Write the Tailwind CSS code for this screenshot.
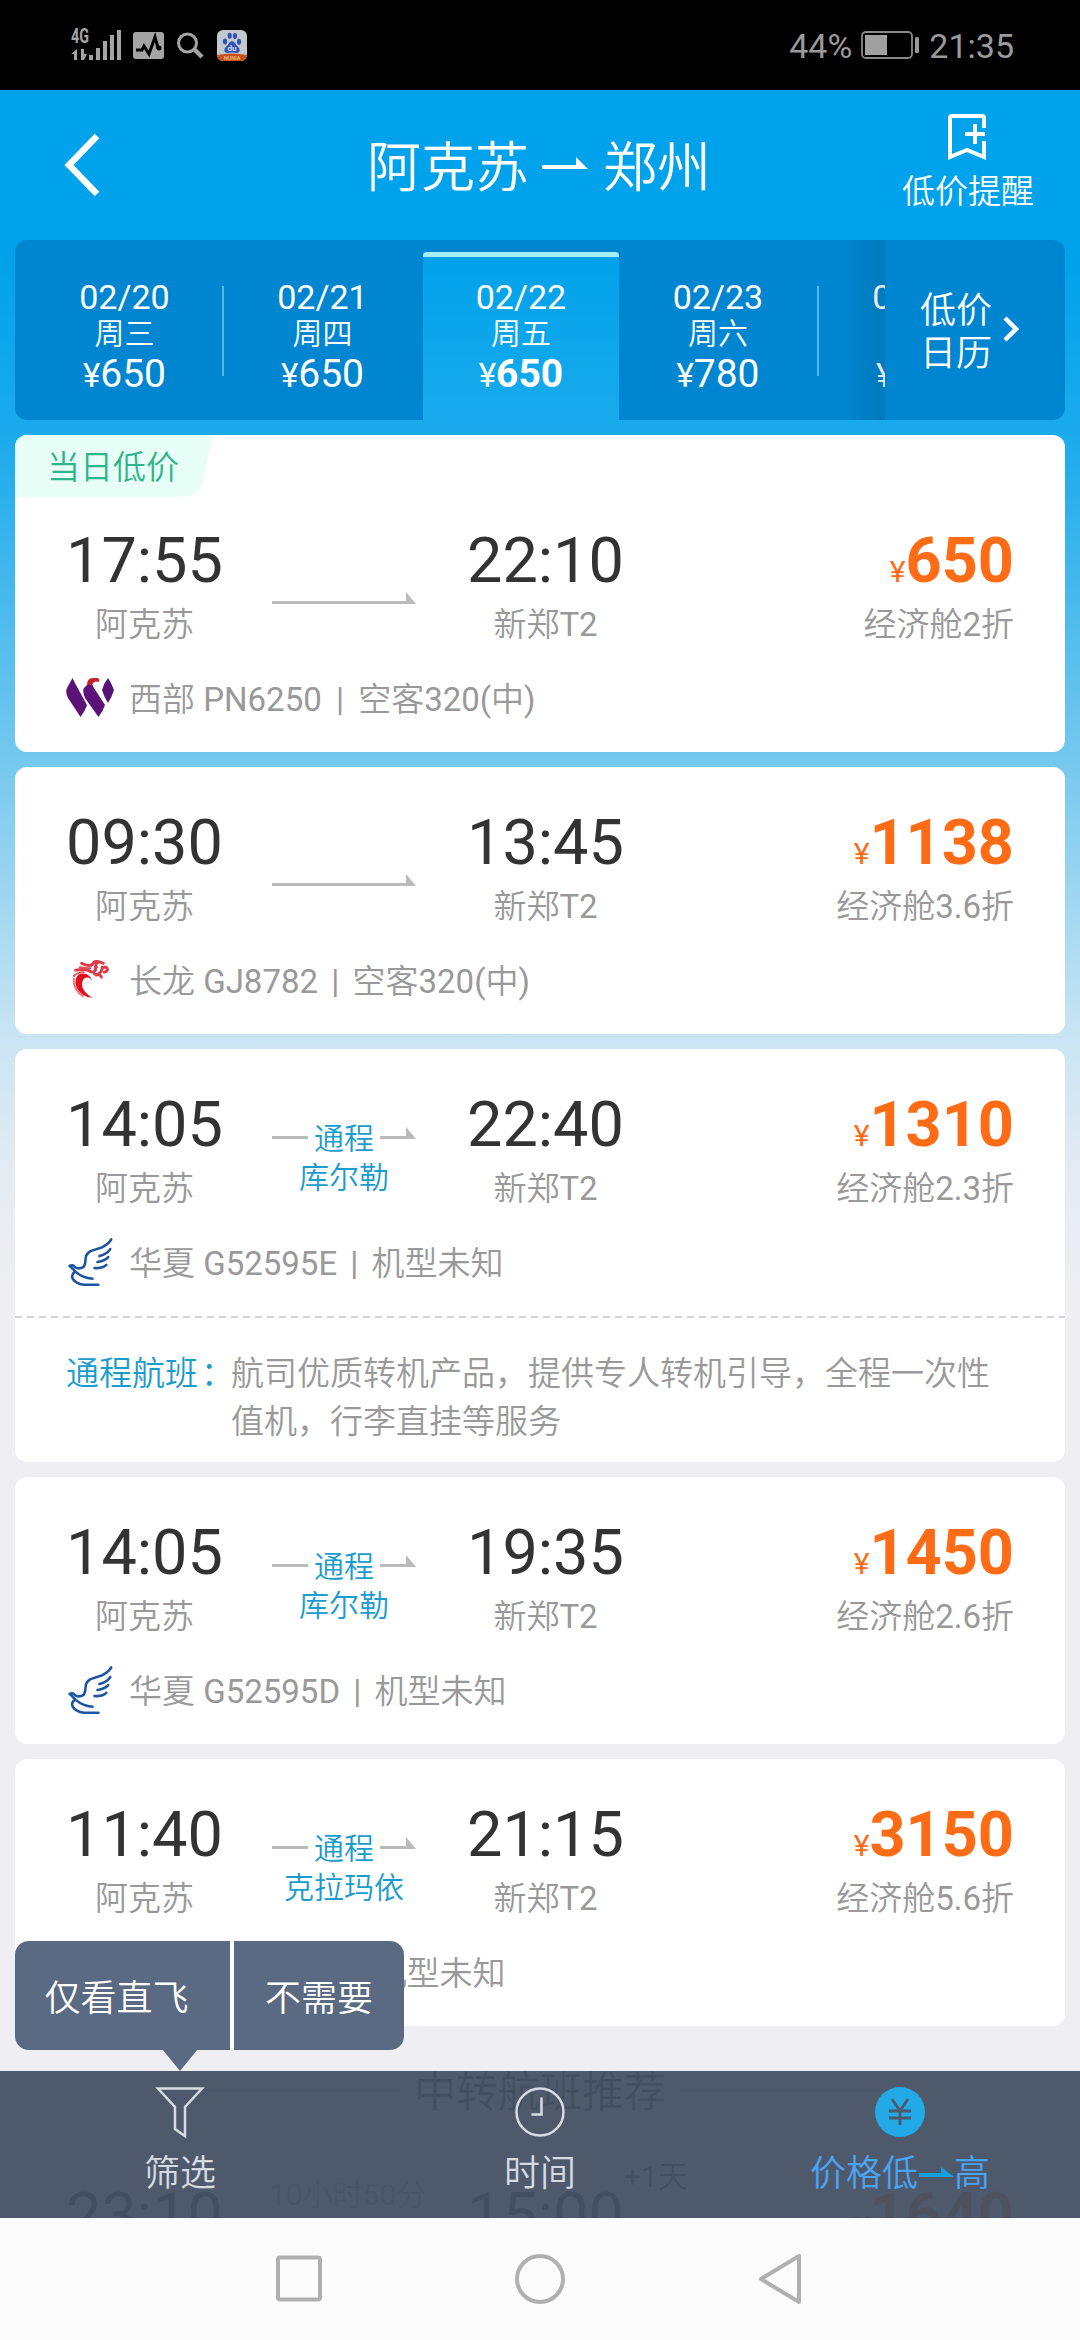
<!DOCTYPE html>
<html lang="zh-CN">
<head>
<meta charset="utf-8">
<title>阿克苏 - 郑州</title>
<script src="https://cdn.jsdelivr.net/npm/@tailwindcss/browser@4"></script>
</head>
<body class="w-[1080px] h-[2340px] overflow-hidden flex flex-col bg-black font-['Roboto','Noto_Sans_CJK_SC_DemiLight','Noto_Sans_CJK_SC',sans-serif]">

<svg class="hidden">
  <!-- airline marks -->
  <symbol id="west" viewBox="0 0 48 48">
    <path fill="#5b1378" d="M6.500 4 10 11 21 31Q19 37 14.500 43L2 24Q-1 18 1 14ZM22 10H26L28 14 39 31Q37 37 32.500 43L19 24Q16 17 18 14ZM42 4Q46 10 48 16 46 23 42 29 38 23 36 16 38 9 42 4Z"/>
    <path fill="#c9202f" d="M21 11Q21 4 27 4H31Q34 4 33 8 28 6 26 11Z"/>
  </symbol>
  <symbol id="loong" viewBox="0 0 75 75">
    <g fill="none" stroke="#dc3a48" stroke-linecap="round">
      <path stroke-width="3" d="M27 20Q34 24 38 21 40 16 49 20M21 27Q32 25 37 29 42 29 41 24M42 32Q48 29 48 24L52 24Q55 28 50 29M40 31Q46 31 47 34M44 19Q40 21 42 24"/>
    </g>
    <path fill="none" stroke="#e2535f" stroke-width="2" stroke-linecap="round" d="M25 24Q31 25 36 25M19 33Q23 29 29 29"/>
    <path fill="#e0101f" d="M38 38Q35 33 30 35 26 39 28 45 31 51 38 55 27 54 22 45 18 35 25 31 34 28 38 38Z"/>
    <path fill="none" stroke="#ef7781" stroke-width="2" d="M19 35Q18 47 29 54"/>
  </symbol>
  <symbol id="swan" viewBox="0 0 75 75">
    <g fill="none" stroke="#1c559f" stroke-width="2.6" stroke-linecap="round" stroke-linejoin="round">
      <path d="M15 41Q18 39 20 42 24 45 29 42 31 39 31 34 31 29 36 26L48 22Q55 18 57 14M45 31Q53 29 56 24M43 37Q51 36 54 32M40 43Q48 44 52 40"/>
      <path d="M15 41 21 47Q28 53 38 54M20 47Q16 50 18 54 21 59 29 60H44"/>
    </g>
  </symbol>
</svg>

<!-- system status bar -->
<div class="h-[90px] shrink-0 flex items-center pl-[71px] pr-[66px] text-[#9a9a9a] text-[34px] leading-none">
  <svg class="w-[51px] h-8 overflow-visible" viewBox="0 0 51 32">
    <text x="0" y="14" font-family="Roboto" font-weight="700" font-size="19.500" textLength="18" lengthAdjust="spacingAndGlyphs" fill="#a4a4a4">4G</text>
    <path fill="#a4a4a4" d="M6 20V31H3V25H0ZM10 20V31H13L16 25H13V20ZM18 26h4v5h-4zM25 19h4v12h-4zM32 12h4v19h-4zM39 6h4v25h-4zM46 1h4v30h-4z"/>
  </svg>
  <svg class="w-[31px] h-[27px] ml-[11px]" viewBox="0 0 31 27"><rect width="31" height="27" rx="3" fill="#a4a4a4"/><path d="M3 18H9L11 14 16 22 22 5 25 16H27" fill="none" stroke="#000" stroke-width="3"/><circle cx="26" cy="16" r="2.5"/></svg>
  <svg class="w-[27px] h-[27px] ml-[13px]" viewBox="0 0 27 27" fill="none" stroke="#a4a4a4"><circle cx="10.500" cy="11" r="9" stroke-width="3"/><path d="M17 17 25 25" stroke-width="4.500"/></svg>
  <svg class="w-[30px] h-[31px] ml-[13px]" viewBox="0 0 30 31">
    <clipPath id="tile"><rect width="30" height="31" rx="6"/></clipPath>
    <g clip-path="url(#tile)"><rect width="30" height="31" fill="#c4c8cf"/>
    <path fill="#2f53b8" d="M8 18Q11 15 12.500 12.500 15 10 17.500 12.500 19 15 22 18 24 22 20 23 15 22 10 23 6 22 8 18Z"/>
    <ellipse cx="8" cy="11.500" rx="2.100" ry="3" fill="#2f53b8"/><ellipse cx="12.700" cy="5.800" rx="2.100" ry="3" fill="#2f53b8"/><ellipse cx="18" cy="6" rx="2.100" ry="3" fill="#2f53b8"/><ellipse cx="22" cy="11.700" rx="2.100" ry="3" fill="#2f53b8"/>
    <path fill="#c8501c" d="M0 25Q15 22 30 25V31H0Z"/></g>
    <text x="15" y="21" text-anchor="middle" font-family="Roboto" font-weight="700" font-size="8" fill="#dde">du</text>
    <text x="15" y="29.500" text-anchor="middle" font-family="Roboto" font-weight="700" font-size="5.500" fill="#e8b070">NUNIA</text>
  </svg>
  <span class="ml-auto pt-0.5">44%</span>
  <svg class="w-[58px] h-7 ml-[9px] mr-[10px]" viewBox="0 0 58 28"><rect x="1" y="1" width="50" height="26" rx="4" fill="none" stroke="#8a8a8a" stroke-width="1.800"/><rect x="4" y="4" width="22" height="20" fill="#a0a0a0"/><rect x="54" y="6" width="4" height="16" rx="1.500" fill="#9a9a9a"/></svg>
  <span class="pt-0.5">21:35</span>
</div>

<!-- app -->
<div class="relative h-[2128px] shrink-0 overflow-hidden bg-[linear-gradient(180deg,#00a2eb_0px,#00a2eb_160px,#1aaaec_340px,#75c8ee_670px,#cae5f3_950px,#e4ebf3_1080px,#eeeef3_1200px)]">

  <header class="h-[150px] flex items-center justify-between pl-16 pr-[46px] text-white">
    <svg class="w-[112px] h-[66px]" viewBox="0 0 112 66"><path d="M33 4 5 33 33 62" fill="none" stroke="#fff" stroke-width="6.500"/></svg>
    <h1 class="flex items-center text-[54px] leading-[60px] pt-2">
      <span>阿克苏</span>
      <svg class="w-[46px] h-3 ml-[13px] mr-[15px] mt-[-12px]" viewBox="0 0 46 12"><path fill="#fff" d="M0 8H34V0L46 12H0Z"/></svg>
      <span>郑州</span>
    </h1>
    <div class="flex flex-col items-center pb-1 text-[33px] leading-10">
      <svg class="w-10 h-[46px] mb-3" viewBox="0 0 40 46" fill="none" stroke="#fff" stroke-width="4"><path d="M36 14V4Q36 2 34 2H4Q2 2 2 4V43L19 36 36 43V27M17 20H37M27 10V30"/></svg>
      <span>低价提醒</span>
    </div>
  </header>

  <!-- date strip -->
  <nav class="mx-[15px] h-[180px] flex rounded-xl overflow-hidden text-white">
    <div class="relative w-[870px] flex overflow-hidden">
      <div class="w-[408px] pl-[11px] flex bg-[#0086d1]">
        <div class="w-[197px] shrink-0 flex flex-col items-center pt-[38px]">
          <span class="text-[34px] leading-[38px]">02/20</span><span class="text-[30px] leading-9">周三</span>
          <span class="text-[39px] leading-[44px]"><span class="text-[33px]">¥</span>650</span>
        </div>
        <div class="w-[2px] h-[90px] mt-[46px] -ml-px shrink-0 bg-[#5bb4e4]"></div>
        <div class="w-[197px] shrink-0 flex flex-col items-center pt-[38px]">
          <span class="text-[34px] leading-[38px]">02/21</span><span class="text-[30px] leading-9">周四</span>
          <span class="text-[39px] leading-[44px]"><span class="text-[33px]">¥</span>650</span>
        </div>
      </div>
      <div class="w-[196px] shrink-0 border-t-[12px] border-[#0086d1] flex flex-col">
        <div class="h-[5px] rounded-t-sm bg-[#a5eefe]"></div>
        <div class="flex flex-col items-center pt-[21px]">
          <span class="text-[34px] leading-[38px]">02/22</span><span class="text-[30px] leading-9">周五</span>
          <span class="text-[39px] leading-[44px] font-bold"><span class="text-[33px] font-normal">¥</span>650</span>
        </div>
      </div>
      <div class="w-[266px] shrink-0 flex bg-[#0086d1]">
        <div class="w-[198px] shrink-0 flex flex-col items-center pt-[38px]">
          <span class="text-[34px] leading-[38px]">02/23</span><span class="text-[30px] leading-9">周六</span>
          <span class="text-[39px] leading-[44px]"><span class="text-[33px]">¥</span>780</span>
        </div>
        <div class="w-[2px] h-[90px] mt-[46px] shrink-0 bg-[#5bb4e4]"></div>
        <div class="w-[197px] shrink-0 flex flex-col items-center pt-[38px]">
          <span class="text-[34px] leading-[38px]">02/24</span><span class="text-[30px] leading-9">周日</span>
          <span class="text-[39px] leading-[44px]"><span class="text-[33px]">¥</span>780</span>
        </div>
      </div>
      <div class="absolute right-0 top-0 w-[44px] h-full bg-linear-to-r from-transparent to-black/10"></div>
    </div>
    <div class="flex-1 flex items-center pl-[35px] pt-1.5 bg-[#0086d1] text-[36px] leading-[43px]">
      <span class="w-[72px]">低价日历</span>
      <svg class="w-[18px] h-7 ml-[10px] -mt-2" viewBox="0 0 18 28"><path d="M3 3 14 14 3 25" fill="none" stroke="#fff" stroke-width="4.500"/></svg>
    </div>
  </nav>

  <!-- flights -->
  <main class="mx-[15px] mt-[15px] flex flex-col gap-[15px] text-[33px] text-[#999]">

    <article class="bg-white rounded-xl overflow-hidden h-[317px] flex flex-col">
      <div class="w-[198px] h-[62px] mb-[-12px] relative flex items-center pl-8 pt-1 text-[#2fb58a]">
        <svg class="absolute left-0 top-0 w-[198px] h-[62px]" viewBox="0 0 198 62"><path fill="#e8fff8" d="M0 0H198L188 46Q184 62 168 62H0Z"/></svg>
        <span class="relative">当日低价</span>
      </div>
      <div class="flex px-[51px] pt-[39px] h-[178px] shrink-0">
        <div class="w-[157px] flex flex-col items-center"><span class="text-[63px] leading-[74px] text-[#333]">17:55</span><span class="leading-[54px]">阿克苏</span></div>
        <svg class="w-36 h-3 ml-[49px] mt-[68px]" viewBox="0 0 144 12"><path fill="#bbb" d="M0 9H134V0L144 12H0Z"/></svg>
        <div class="w-[157px] ml-[51px] flex flex-col items-center"><span class="text-[63px] leading-[74px] text-[#333]">22:10</span><span class="leading-[54px]">新郑T2</span></div>
        <div class="ml-auto flex flex-col items-end"><span class="flex items-baseline h-[74px] text-[63px] leading-[74px] font-bold text-[#ff6c15]"><span class="text-[30px] leading-none font-normal">¥</span>650</span><span class="leading-[54px]">经济舱2折</span></div>
      </div>
      <div class="flex items-center px-[51px] h-[70px]"><svg class="w-12 h-12 mr-[15px]"><use href="#west"/></svg><span class="pt-1">西部 PN6250 <span class="mx-[6px]">|</span> 空客320(中)</span></div>
    </article>

    <article class="bg-white rounded-xl h-[267px]">
      <div class="flex px-[51px] pt-[39px] h-[178px]">
        <div class="w-[157px] flex flex-col items-center"><span class="text-[63px] leading-[74px] text-[#333]">09:30</span><span class="leading-[54px]">阿克苏</span></div>
        <svg class="w-36 h-3 ml-[49px] mt-[68px]" viewBox="0 0 144 12"><path fill="#bbb" d="M0 9H134V0L144 12H0Z"/></svg>
        <div class="w-[157px] ml-[51px] flex flex-col items-center"><span class="text-[63px] leading-[74px] text-[#333]">13:45</span><span class="leading-[54px]">新郑T2</span></div>
        <div class="ml-auto flex flex-col items-end"><span class="flex items-baseline h-[74px] text-[63px] leading-[74px] font-bold text-[#ff6c15]"><span class="text-[30px] leading-none font-normal">¥</span>1138</span><span class="leading-[54px]">经济舱3.6折</span></div>
      </div>
      <div class="flex items-center pl-10 h-[70px]"><svg class="w-[74px] h-[75px]"><use href="#loong"/></svg><span class="pt-1">长龙 GJ8782 <span class="mx-[5px]">|</span> 空客320(中)</span></div>
    </article>

    <article class="bg-white rounded-xl h-[413px]">
      <div class="flex px-[51px] pt-[39px] h-[178px]">
        <div class="w-[157px] flex flex-col items-center"><span class="text-[63px] leading-[74px] text-[#333]">14:05</span><span class="leading-[54px]">阿克苏</span></div>
        <div class="w-36 ml-[49px] mt-[31px] flex flex-col items-center text-[30px] leading-[39px] text-[#1a9cce]">
          <div class="w-full flex items-center justify-between"><svg class="w-9 h-3 -mt-3" viewBox="0 0 36 12"><path fill="#bbb" d="M0 9H36V12H0Z"/></svg>通程<svg class="w-9 h-3 -mt-3" viewBox="0 0 36 12"><path fill="#bbb" d="M0 9H26V0L36 12H0Z"/></svg></div>
          <span>库尔勒</span>
        </div>
        <div class="w-[157px] ml-[51px] flex flex-col items-center"><span class="text-[63px] leading-[74px] text-[#333]">22:40</span><span class="leading-[54px]">新郑T2</span></div>
        <div class="ml-auto flex flex-col items-end"><span class="flex items-baseline h-[74px] text-[63px] leading-[74px] font-bold text-[#ff6c15]"><span class="text-[30px] leading-none font-normal">¥</span>1310</span><span class="leading-[54px]">经济舱2.3折</span></div>
      </div>
      <div class="flex items-center pl-10 h-[70px]"><svg class="w-[74px] h-[75px]"><use href="#swan"/></svg><span class="pt-1">华夏 G52595E <span class="mx-[5px]">|</span> 机型未知</span></div>
      <div class="mt-[19px] h-[2px] bg-[repeating-linear-gradient(90deg,#d4d4d4_0px,#d4d4d4_7px,transparent_7px,transparent_12px)]"></div>
      <div class="flex pl-[51px] pt-8 leading-[48px]"><span class="w-[165px] shrink-0 whitespace-nowrap text-[#1a9cce]">通程航班<span class="ml-[3px]">：</span></span><p class="w-[765px]">航司优质转机产品，提供专人转机引导，全程一次性<br>值机，行李直挂等服务</p></div>
    </article>

    <article class="bg-white rounded-xl h-[267px]">
      <div class="flex px-[51px] pt-[39px] h-[178px]">
        <div class="w-[157px] flex flex-col items-center"><span class="text-[63px] leading-[74px] text-[#333]">14:05</span><span class="leading-[54px]">阿克苏</span></div>
        <div class="w-36 ml-[49px] mt-[31px] flex flex-col items-center text-[30px] leading-[39px] text-[#1a9cce]">
          <div class="w-full flex items-center justify-between"><svg class="w-9 h-3 -mt-3" viewBox="0 0 36 12"><path fill="#bbb" d="M0 9H36V12H0Z"/></svg>通程<svg class="w-9 h-3 -mt-3" viewBox="0 0 36 12"><path fill="#bbb" d="M0 9H26V0L36 12H0Z"/></svg></div>
          <span>库尔勒</span>
        </div>
        <div class="w-[157px] ml-[51px] flex flex-col items-center"><span class="text-[63px] leading-[74px] text-[#333]">19:35</span><span class="leading-[54px]">新郑T2</span></div>
        <div class="ml-auto flex flex-col items-end"><span class="flex items-baseline h-[74px] text-[63px] leading-[74px] font-bold text-[#ff6c15]"><span class="text-[30px] leading-none font-normal">¥</span>1450</span><span class="leading-[54px]">经济舱2.6折</span></div>
      </div>
      <div class="flex items-center pl-10 h-[70px]"><svg class="w-[74px] h-[75px]"><use href="#swan"/></svg><span class="pt-1">华夏 G52595D <span class="mx-[5px]">|</span> 机型未知</span></div>
    </article>

    <article class="bg-white rounded-xl h-[267px]">
      <div class="flex px-[51px] pt-[39px] h-[178px]">
        <div class="w-[157px] flex flex-col items-center"><span class="text-[63px] leading-[74px] text-[#333]">11:40</span><span class="leading-[54px]">阿克苏</span></div>
        <div class="w-36 ml-[49px] mt-[31px] flex flex-col items-center text-[30px] leading-[39px] text-[#1a9cce]">
          <div class="w-full flex items-center justify-between"><svg class="w-9 h-3 -mt-3" viewBox="0 0 36 12"><path fill="#bbb" d="M0 9H36V12H0Z"/></svg>通程<svg class="w-9 h-3 -mt-3" viewBox="0 0 36 12"><path fill="#bbb" d="M0 9H26V0L36 12H0Z"/></svg></div>
          <span>克拉玛依</span>
        </div>
        <div class="w-[157px] ml-[51px] flex flex-col items-center"><span class="text-[63px] leading-[74px] text-[#333]">21:15</span><span class="leading-[54px]">新郑T2</span></div>
        <div class="ml-auto flex flex-col items-end"><span class="flex items-baseline h-[74px] text-[63px] leading-[74px] font-bold text-[#ff6c15]"><span class="text-[30px] leading-none font-normal">¥</span>3150</span><span class="leading-[54px]">经济舱5.6折</span></div>
      </div>
      <div class="flex items-center pl-10 h-[70px]"><svg class="w-[74px] h-[75px]"><use href="#swan"/></svg><span class="pt-1">华夏 G52595B <span class="mx-[5px]">|</span> 机型未知</span></div>
    </article>

    <div class="h-[84px] flex items-center justify-center gap-3.5 pt-[19px] text-[42px] leading-[48px] text-[#333]">
      <div class="w-[200px] h-[2px] -mt-1.5 bg-[#bbb]"></div><span>中转航班推荐</span><div class="w-[200px] h-[2px] -mt-1.5 bg-[#bbb]"></div>
    </div>

    <article class="bg-white rounded-xl h-[267px]">
      <div class="flex px-[51px] pt-[39px] h-[178px]">
        <div class="w-[157px] text-center text-[63px] leading-[74px] text-[#333]">23:10</div>
        <div class="w-[150px] ml-[46px] -mt-0.5 text-[30px] leading-9 text-center whitespace-nowrap">10小时50分</div>
        <div class="relative w-[157px] ml-[48px] text-center text-[63px] leading-[74px] text-[#333]">15:00<span class="absolute left-full -top-[22px] text-[30px] leading-10 whitespace-nowrap">+1天</span></div>
        <div class="ml-auto flex items-baseline h-[74px] text-[63px] leading-[74px] font-bold text-[#ff6c15]"><span class="text-[30px] leading-none font-normal">¥</span>1640</div>
      </div>
    </article>
  </main>

  <!-- filter bar -->
  <div class="absolute left-0 right-0 bottom-0 h-[147px] grid grid-cols-3 bg-[#445163]/95 text-[36px] leading-[44px] text-[#d5dbe3]">
    <div class="flex flex-col items-center pt-[14px]"><svg class="w-[50px] h-[54px] mb-[13px]" viewBox="0 0 50 54"><path d="M3 3.500H47L30 22V51L20 44V22Z" fill="none" stroke="#d5dbe3" stroke-width="2.500"/></svg>筛选</div>
    <div class="flex flex-col items-center pt-[14px]"><svg class="w-[52px] h-[54px] mb-[13px]" viewBox="0 0 52 54" fill="none" stroke="#d5dbe3" stroke-width="2.500"><circle cx="26" cy="27" r="23.500"/><path d="M27.500 12.500V29.500H17.500"/></svg>时间</div>
    <div class="flex flex-col items-center pt-[14px] text-[#4aa3f5]"><svg class="w-[52px] h-[54px] mb-[13px]" viewBox="0 0 52 54"><circle cx="26" cy="27" r="25" fill="#22a9e6"/><path d="M18 14 26 26 34 14M26 26V40M15 26H37M15 33H37" fill="none" stroke="#4d596a" stroke-width="2.800"/></svg>
      <div class="flex items-center">价格低<svg class="w-[34px] h-2.5 mx-px -mt-1" viewBox="0 0 34 10"><path fill="#149fe0" d="M0 6H22V0L34 9V10H0Z"/></svg>高</div>
    </div>
  </div>

  <!-- quick filter bubble -->
  <div class="absolute left-[15px] bottom-[168px] w-[389px] h-[109px] flex gap-1 rounded-[14px] text-[36px] text-white">
    <div class="w-[215px] flex items-center justify-center rounded-l-[14px] bg-[#5a6a82] pt-1.5 pr-3">仅看直飞</div>
    <div class="flex-1 flex items-center justify-center rounded-r-[14px] bg-[#5a6a82] pt-1.5">不需要</div>
    <svg class="absolute left-[147px] top-[108px] w-9 h-[22px]" viewBox="0 0 36 22"><path fill="#5a6a82" d="M0 0H36L18 22Z"/></svg>
    <div class="absolute left-[215px] top-0 w-1 h-full bg-white"></div>
  </div>
</div>

<!-- system navigation -->
<div class="h-[122px] shrink-0 bg-[#fcfcfc] flex justify-center items-center gap-[191px] px-[270px]">
  <svg class="w-[50px] h-[54px]" viewBox="0 0 50 54" fill="none" stroke="#b0b0b0" stroke-width="4"><rect x="4" y="5.500" width="42" height="42" rx="2"/></svg>
  <svg class="w-[50px] h-[54px]" viewBox="0 0 50 54" fill="none" stroke="#b0b0b0" stroke-width="4"><circle cx="25" cy="27" r="23"/></svg>
  <svg class="w-[50px] h-[54px]" viewBox="0 0 50 54" fill="none" stroke="#b0b0b0" stroke-width="4" stroke-linejoin="round"><path d="M43 4V50L5 27Z"/></svg>
</div>
</body>
</html>
